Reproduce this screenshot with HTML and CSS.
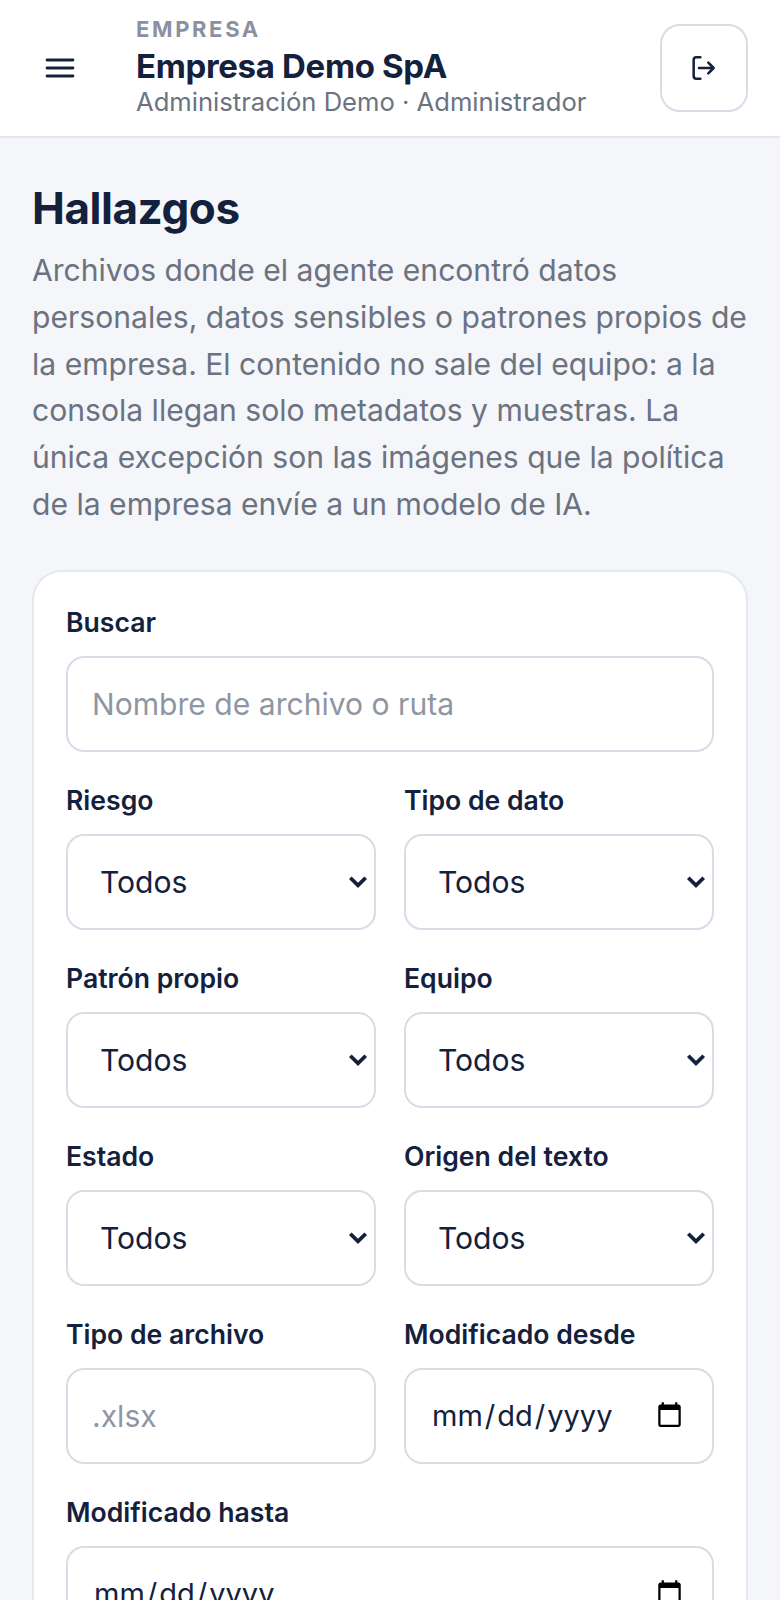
FILE: index.html
```html
<!DOCTYPE html>
<html lang="es">
<head>
<meta charset="utf-8">
<title>Hallazgos</title>
<link rel="stylesheet" href="styles.css">
</head>
<body>
<div class="app">
  <header class="topbar">
    <button class="menu-btn" type="button" aria-label="Menú">
      <svg class="icon-menu" viewBox="0 0 18 18"><path d="M2.5 5h13M2.5 9h13M2.5 13h13"/></svg>
    </button>
    <div class="brand">
      <div class="eyebrow">EMPRESA</div>
      <div class="company">Empresa Demo SpA</div>
      <div class="meta">Administración Demo · Administrador</div>
    </div>
    <button class="logout" type="button" aria-label="Salir">
      <svg class="icon-logout" viewBox="0 0 24 24"><path d="M10 4H7a2 2 0 0 0-2 2v12a2 2 0 0 0 2 2h3M9 12h11M16 8l4 4-4 4"/></svg>
    </button>
  </header>
  <main class="content">
    <h1>Hallazgos</h1>
    <p class="lead">Archivos donde el agente encontró datos personales, datos sensibles o patrones propios de la empresa. El contenido no sale del equipo: a la consola llegan solo metadatos y muestras. La única excepción son las imágenes que la política de la empresa envíe a un modelo de IA.</p>
    <form class="card">
      <label class="field full"><span>Buscar</span><input type="text" placeholder="Nombre de archivo o ruta"></label>
      <label class="field"><span>Riesgo</span><select><option>Todos</option></select></label>
      <label class="field"><span>Tipo de dato</span><select><option>Todos</option></select></label>
      <label class="field"><span>Patrón propio</span><select><option>Todos</option></select></label>
      <label class="field"><span>Equipo</span><select><option>Todos</option></select></label>
      <label class="field"><span>Estado</span><select><option>Todos</option></select></label>
      <label class="field"><span>Origen del texto</span><select><option>Todos</option></select></label>
      <label class="field"><span>Tipo de archivo</span><input type="text" placeholder=".xlsx"></label>
      <label class="field"><span>Modificado desde</span><input type="date"></label>
      <label class="field full"><span>Modificado hasta</span><input type="date"></label>
    </form>
  </main>
</div>
</body>
</html>
```
FILE: styles.css
```css
* { box-sizing: border-box; }
html, body { margin: 0; height: 100%; overflow: hidden; }
body { background: #f4f6fa; font-family: Inter, "Noto Sans", sans-serif; color: #14213d; }
.app { zoom: 2; width: 390px; }
.topbar { display: flex; align-items: center; background: #fff; border-bottom: 1px solid #e4e8ee; height: 69px; padding: 0 16px; }
.menu-btn { width: 36px; height: 36px; border: 0; background: none; padding: 0; display: flex; align-items: center; justify-content: center; color: #14213d; margin-right: 16px; flex: none; margin-left: -4px; }
.icon-menu { width: 18px; height: 18px; fill: none; stroke: currentColor; stroke-width: 1.4; stroke-linecap: round; }
.brand { flex: 1; min-width: 0; margin-left: 4px; padding-bottom: 1.5px; }
.eyebrow { font-size: 11px; line-height: 14px; font-weight: 700; letter-spacing: .12em; color: #8b91a1; margin-bottom: 1.5px; }
.company { font-size: 16.5px; line-height: 20px; font-weight: 700; letter-spacing: -.01em; color: #14213d; }
.meta { font-size: 12.8px; line-height: 16px; color: #6b7280; }
.logout { width: 44px; height: 44px; flex: none; background: #fff; border: 1px solid #d9dce6; border-radius: 10px; padding: 0 1px 0 0; display: flex; align-items: center; justify-content: center; color: #14213d; }
.icon-logout { width: 16px; height: 16px; fill: none; stroke: currentColor; stroke-width: 1.9; stroke-linecap: round; stroke-linejoin: round; }
.content { padding: 21px 16px 24px; }
h1 { margin: 0 0 5.5px; font-size: 22px; line-height: 28px; font-weight: 700; letter-spacing: -.01em; color: #14213d; }
.lead { margin: 0 0 21px; font-size: 15.05px; line-height: 23.4px; color: #6b7280; }
.card { background: #fff; border: 1px solid #e4e8ef; border-radius: 15px; padding: 16.5px 16px 16px; display: grid; grid-template-columns: 1fr 1fr; gap: 15.5px 14px; }
.field { display: flex; flex-direction: column; gap: 8.5px; min-width: 0; }
.field.full { grid-column: 1 / -1; }
.field span { font-size: 13.3px; line-height: 17px; font-weight: 600; color: #14213d; }
input, select { width: 100%; height: 48px; background-color: #fff; border: 1px solid #d9dce6; border-radius: 9px; padding: 0 12px; font: 400 15.05px Inter, "Noto Sans", sans-serif; color: #14213d; }
input::placeholder { color: #8f96a3; }
input[type="date"] { font-size: 14.5px; }
select { appearance: none; padding-left: 16px; background-image: url("data:image/svg+xml,%3Csvg xmlns='http://www.w3.org/2000/svg' viewBox='0 0 18 12'%3E%3Cpath d='M2 2.5l7 7 7-7' fill='none' stroke='%2314213d' stroke-width='3.4'/%3E%3C/svg%3E"); background-repeat: no-repeat; background-size: 10px 6.6px; background-position: right 3px center; }
```
